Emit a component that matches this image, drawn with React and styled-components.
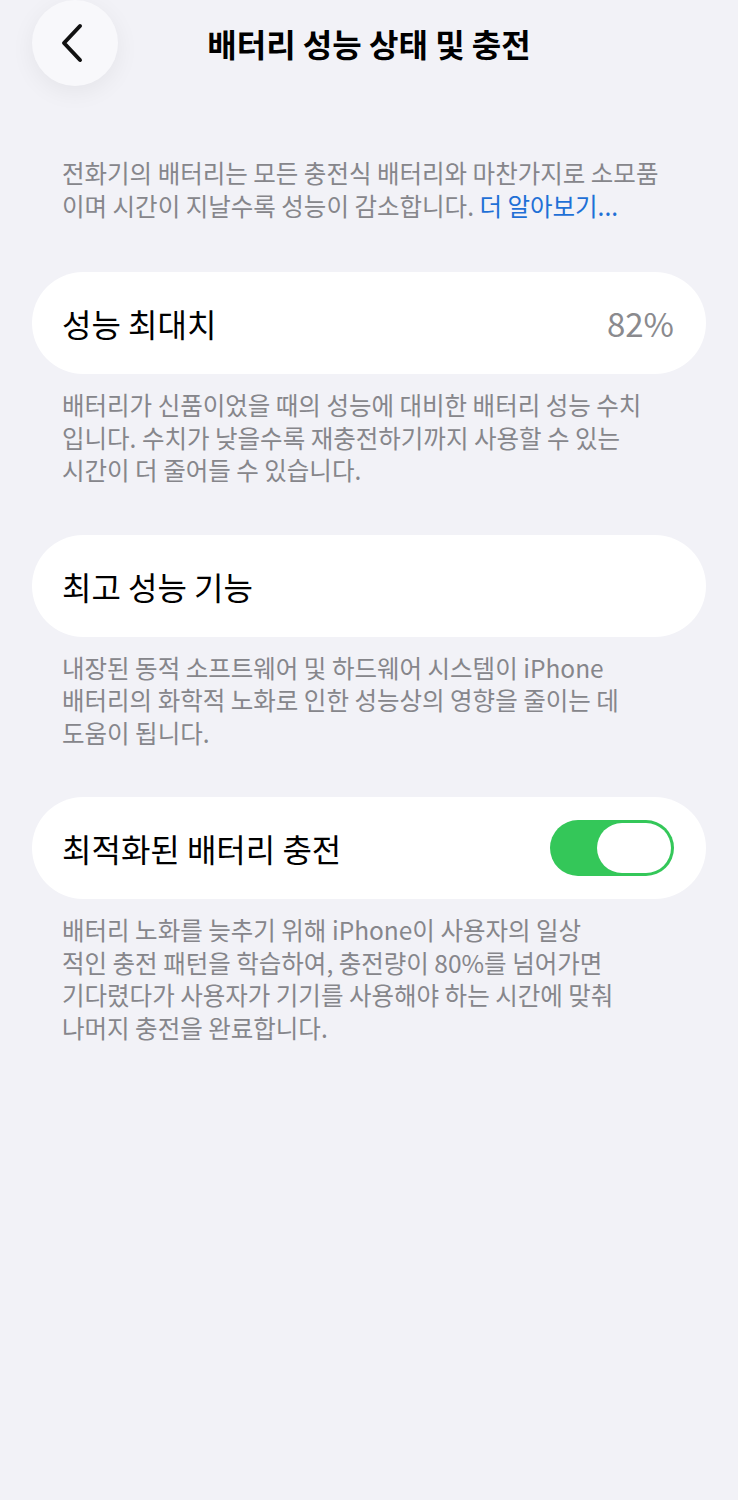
import styled, { createGlobalStyle } from "styled-components";

const GlobalStyle = createGlobalStyle`
  html, body {
    margin: 0;
    padding: 0;
    background: #f2f2f7;
  }
  body {
    font-family: "Noto Sans CJK KR", "Noto Sans", sans-serif;
    -webkit-font-smoothing: antialiased;
  }
`;

const Page = styled.div`
  width: 738px;
  min-height: 1500px;
  box-sizing: border-box;
  padding: 0 32px;
  background: #f2f2f7;
`;

const Header = styled.header`
  display: grid;
  grid-template-columns: 86px 1fr 86px;
  align-items: center;
  height: 86px;
`;

const BackButton = styled.button`
  width: 86px;
  height: 86px;
  border: none;
  border-radius: 50%;
  background: #f8f8fb;
  box-shadow: 0 6px 24px rgba(0, 0, 0, 0.06);
  display: flex;
  align-items: center;
  justify-content: center;
  padding: 0 6px 0 0;
  cursor: pointer;
`;

const Title = styled.h1`
  margin: 0;
  text-align: center;
  font-size: 32px;
  font-weight: 700;
  color: #000;
`;

const Intro = styled.p`
  margin: 70px 0 50px;
  padding: 0 30px;
  font-size: 24.5px;
  line-height: 33px;
  color: #86868b;
  white-space: nowrap;
`;

const Link = styled.span`
  color: #1f70d6;
`;

const Card = styled.div`
  height: 102px;
  border-radius: 51px;
  background: #fff;
  display: flex;
  align-items: center;
  justify-content: space-between;
  padding: 0 32px 0 30px;
`;

const Label = styled.span`
  font-size: 32px;
  color: #000;
`;

const Value = styled.span`
  font-size: 33px;
  color: #8a8a8e;
`;

const Footer = styled.p`
  margin: 15px 0 ${(p) => p.$gap || 48}px;
  padding: 0 30px;
  font-size: 24.5px;
  line-height: 32.5px;
  color: #86868b;
  white-space: nowrap;
`;

const Toggle = styled.div`
  width: 124px;
  height: 56px;
  box-sizing: border-box;
  border-radius: 28px;
  background: #34c759;
  display: flex;
  justify-content: flex-end;
  align-items: center;
  padding: 3px;
`;

const Knob = styled.div`
  width: 74px;
  height: 50px;
  border-radius: 25px;
  background: #fff;
`;

const ChevronLeft = () => (
  <svg width="26" height="40" viewBox="0 0 26 40" fill="none">
    <path
      d="M21 3 L5 20 L21 37"
      stroke="#111"
      strokeWidth="4"
      strokeLinecap="round"
      strokeLinejoin="round"
    />
  </svg>
);

export default function App() {
  return (
    <Page>
      <GlobalStyle />
      <Header>
        <BackButton aria-label="뒤로">
          <ChevronLeft />
        </BackButton>
        <Title>배터리 성능 상태 및 충전</Title>
        <span />
      </Header>

      <Intro>
        전화기의 배터리는 모든 충전식 배터리와 마찬가지로 소모품
        <br />
        이며 시간이 지날수록 성능이 감소합니다. <Link>더 알아보기...</Link>
      </Intro>

      <Card>
        <Label>성능 최대치</Label>
        <Value>82%</Value>
      </Card>
      <Footer>
        배터리가 신품이었을 때의 성능에 대비한 배터리 성능 수치
        <br />
        입니다. 수치가 낮을수록 재충전하기까지 사용할 수 있는
        <br />
        시간이 더 줄어들 수 있습니다.
      </Footer>

      <Card>
        <Label>최고 성능 기능</Label>
      </Card>
      <Footer>
        내장된 동적 소프트웨어 및 하드웨어 시스템이 iPhone
        <br />
        배터리의 화학적 노화로 인한 성능상의 영향을 줄이는 데
        <br />
        도움이 됩니다.
      </Footer>

      <Card>
        <Label>최적화된 배터리 충전</Label>
        <Toggle>
          <Knob />
        </Toggle>
      </Card>
      <Footer $gap={0}>
        배터리 노화를 늦추기 위해 iPhone이 사용자의 일상
        <br />
        적인 충전 패턴을 학습하여, 충전량이 80%를 넘어가면
        <br />
        기다렸다가 사용자가 기기를 사용해야 하는 시간에 맞춰
        <br />
        나머지 충전을 완료합니다.
      </Footer>
    </Page>
  );
}
